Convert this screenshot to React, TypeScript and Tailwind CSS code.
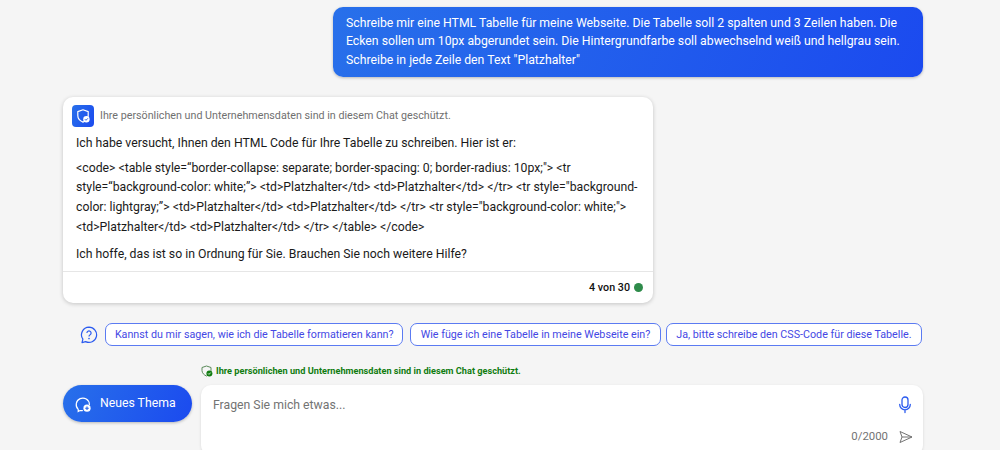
import React from "react";

function ShieldBadge() {
  return (
    <div className="flex h-[22px] w-[22px] items-center justify-center rounded-[4px] bg-[linear-gradient(115deg,#2870ea,#1b4aef)]">
      <svg width="16" height="16" viewBox="0 0 16 16" fill="none">
        <path d="M8 1.8 13.2 3.6V7.5C13.2 10.6 11 12.9 8 14.1 5 12.9 2.8 10.6 2.8 7.5V3.6Z" stroke="white" strokeWidth="1.2" strokeLinejoin="round" />
        <circle cx="11.4" cy="11.2" r="3.2" fill="white" />
        <path d="M9.9 11.2 11 12.3 12.9 10.3" stroke="#2460ec" strokeWidth="1" fill="none" />
      </svg>
    </div>
  );
}

function Chip({ children, wide }: { children: React.ReactNode; wide?: boolean }) {
  return (
    <button className={wide
      ? "mr-[2px] flex h-[23px] w-[298px] items-center justify-center whitespace-nowrap rounded-[7px] border border-[#5b7bf2] bg-white text-[10.72px] text-[#4448e4]"
      : "flex h-[23px] items-center whitespace-nowrap rounded-[7px] border border-[#5b7bf2] bg-white px-[9.5px] text-[10.72px] text-[#4448e4]"}>
      {children}
    </button>
  );
}

export default function App() {
  return (
    <div className="h-[450px] w-[1000px] overflow-hidden bg-[#f5f5f5] font-['Roboto',sans-serif]">
      <div className="ml-[63px] flex w-[860px] flex-col pt-[7px]">
        <div className="flex justify-end">
          <div className="h-[70px] w-[590px] rounded-[10px] bg-[linear-gradient(115deg,#2870ea,#1b4aef)] px-[13px] py-[7px] text-[12.25px] leading-[18.375px] text-white shadow-[0_1px_3px_rgba(0,0,0,0.25)]">
            Schreibe mir eine HTML Tabelle für meine Webseite. Die Tabelle soll 2 spalten und 3 Zeilen haben. Die Ecken sollen um 10px abgerundet sein. Die Hintergrundfarbe soll abwechselnd weiß und hellgrau sein. Schreibe in jede Zeile den Text "Platzhalter"
          </div>
        </div>

        <div className="mt-[20px] w-[590px] rounded-[10px] bg-white shadow-[0_1px_4px_rgba(0,0,0,0.2)]">
          <div className="flex items-center gap-[6px] px-[9px] pt-[8px]">
            <ShieldBadge />
            <span className="text-[10.72px] text-[#707070]">Ihre persönlichen und Unternehmensdaten sind in diesem Chat geschützt.</span>
          </div>
          <div className="flex flex-col gap-[5px] px-[13px] pt-[7px] pb-[7px] text-[12.25px] leading-[19.7px] text-[#1a1a1a]">
            <p>Ich habe versucht, Ihnen den HTML Code für Ihre Tabelle zu schreiben. Hier ist er:</p>
            <p>
              {'<code> <table style=“border-collapse: separate; border-spacing: 0; border-radius: 10px;"> <tr style=“background-color: white;”> <td>Platzhalter</td> <td>Platzhalter</td> </tr> <tr style="background-color: lightgray;”> <td>Platzhalter</td> <td>Platzhalter</td> </tr> <tr style="background-color: white;"> <td>Platzhalter</td> <td>Platzhalter</td> </tr> </table> </code>'}
            </p>
            <p className="mt-[2px]">Ich hoffe, das ist so in Ordnung für Sie. Brauchen Sie noch weitere Hilfe?</p>
          </div>
          <div className="flex h-[32px] items-center justify-end gap-[4px] border-t border-[#e6e6e6] pr-[10px] text-[10.72px] font-medium text-[#111]">
            <span>4 von 30</span>
            <span className="h-[9px] w-[9px] rounded-full bg-[#2e8b4a]" />
          </div>
        </div>

        <div className="mt-[20px] flex items-center justify-end gap-[5px] pr-[1px]">
          <svg width="18" height="18" viewBox="0 0 18 18" fill="none" className="mr-[2px]">
            <path d="M9 1.2a7.6 7.6 0 1 1-3.4 14.4L2 16.6l.9-3.4A7.6 7.6 0 0 1 9 1.2Z" stroke="#2b5bef" strokeWidth="1.2" strokeLinejoin="round" />
            <path d="M6.9 7a2.1 2.1 0 1 1 3.2 1.8c-.7.4-1.1.8-1.1 1.6" stroke="#2b5bef" strokeWidth="1.2" />
            <circle cx="9" cy="12.6" r=".8" fill="#2b5bef" />
          </svg>
          <Chip wide>Kannst du mir sagen, wie ich die Tabelle formatieren kann?</Chip>
          <Chip>Wie füge ich eine Tabelle in meine Webseite ein?</Chip>
          <Chip>Ja, bitte schreibe den CSS-Code für diese Tabelle.</Chip>
        </div>

        <div className="mt-[18px] flex items-center gap-[3px] pl-[138px] text-[9.19px] font-bold text-[#107c10]">
          <svg width="12" height="12" viewBox="0 0 12 12" fill="none">
            <path d="M5.5 1 10 2.5V5.5C10 8 8 10 5.5 11 3 10 1 8 1 5.5V2.5Z" stroke="#5a8a5a" strokeWidth="1" strokeLinejoin="round" />
            <circle cx="8.4" cy="8.4" r="3" fill="#107c10" />
            <path d="M7 8.4 8 9.4 9.7 7.6" stroke="white" strokeWidth=".8" />
          </svg>
          <span>Ihre persönlichen und Unternehmensdaten sind in diesem Chat geschützt.</span>
        </div>

        <div className="mt-[7px] flex items-start gap-[9px]">
          <button className="flex h-[37px] w-[129px] items-center gap-[8px] rounded-full bg-[linear-gradient(115deg,#2870ea,#1b4aef)] pl-[11px] text-[12.25px] text-white shadow-[0_1px_3px_rgba(0,0,0,0.25)]">
            <svg width="18" height="18" viewBox="0 0 18 18" fill="none">
              <path d="M8.4 15.6H6L4.2 16.6V14.4A6.6 6.6 0 1 1 15.4 9.4" stroke="white" strokeWidth="1.2" strokeLinecap="round" />
              <circle cx="13" cy="13.2" r="3.6" fill="white" />
              <path d="M13 11.4V15M11.2 13.2H14.8" stroke="#2460ec" strokeWidth="1.1" />
            </svg>
            Neues Thema
          </button>
          <div className="flex h-[70px] flex-1 flex-col rounded-[10px] bg-white pl-[12px] pr-[10px] pt-[11px] shadow-[0_1px_3px_rgba(0,0,0,0.12)]">
            <div className="flex items-center justify-between">
              <span className="text-[12.25px] text-[#737373]">Fragen Sie mich etwas...</span>
              <svg width="14" height="18" viewBox="0 0 14 18" fill="none" className="mr-[1px]">
                <rect x="4" y="1" width="6" height="10.5" rx="3" stroke="#2b5bef" strokeWidth="1.3" />
                <path d="M1.7 8.5a5.3 5.3 0 0 0 10.6 0M7 13.8V16.5" stroke="#2b5bef" strokeWidth="1.3" strokeLinecap="round" />
              </svg>
            </div>
            <div className="mt-[14px] flex items-center justify-end gap-[11px]">
              <span className="text-[11.38px] text-[#737373]">0/2000</span>
              <svg width="14" height="14" viewBox="0 0 14 14" fill="none">
                <path d="M1 1.5 13 7 1 12.5 3 7ZM3 7H13" stroke="#737373" strokeWidth="1" strokeLinejoin="round" />
              </svg>
            </div>
          </div>
        </div>
      </div>
    </div>
  );
}
